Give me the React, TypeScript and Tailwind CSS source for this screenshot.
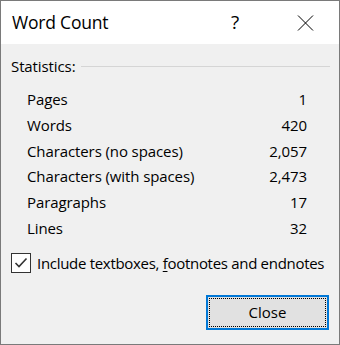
import React from "react";

const rows: [string, string][] = [
  ["Pages", "1"],
  ["Words", "420"],
  ["Characters (no spaces)", "2,057"],
  ["Characters (with spaces)", "2,473"],
  ["Paragraphs", "17"],
  ["Lines", "32"],
];

export default function App() {
  return (
    <div
      className="w-[340px] h-[345px] border border-[#7a7a7a] bg-[#f0f0f0] flex flex-col text-[#000] overflow-hidden"
      style={{ fontFamily: '"Open Sans", "Noto Sans", sans-serif' }}
    >
      <div className="h-[43px] bg-white flex items-center pl-[11px] shrink-0 relative">
        <span className="text-[17.5px] leading-none tracking-[-0.2px]">Word Count</span>
        <span className="absolute left-[230px] top-[12px] text-[19px] leading-none">?</span>
        <svg className="absolute left-[296px] top-[14px]" width="17" height="16" viewBox="0 0 17 16">
          <path d="M1 0.5 L16 15.5 M16 0.5 L1 15.5" stroke="#000" strokeWidth="1" fill="none" />
        </svg>
      </div>
      <div className="flex flex-col pl-[10px] pr-[9px] pt-[12px]">
        <div className="flex items-center h-[20px]">
          <span className="text-[15px] leading-none tracking-[-0.1px]">Statistics:</span>
          <div className="flex-1 h-px bg-[#d5d5d5] ml-[5px]" />
        </div>
        <div className="flex flex-col pl-[16px] pr-[23px] pt-[11px]">
          {rows.map(([k, v]) => (
            <div key={k} className="flex justify-between items-center h-[25.7px] text-[15px] leading-none tracking-[-0.1px]">
              <span>{k}</span>
              <span>{v}</span>
            </div>
          ))}
        </div>
        <div className="flex items-center mt-[12px] h-[20px]">
          <div className="w-[20px] h-[20px] border border-[#333] bg-white flex items-center justify-center shrink-0">
            <svg width="14" height="12" viewBox="0 0 14 12">
              <path d="M1.5 6 L5 9.5 L12.5 1.5" stroke="#333" strokeWidth="1.6" fill="none" />
            </svg>
          </div>
          <span className="ml-[6px] text-[15px] leading-none tracking-[-0.3px] whitespace-nowrap">
            Include textboxes, <u className="underline-offset-2">f</u>ootnotes and endnotes
          </span>
        </div>
        <div className="flex justify-end mt-[22px] pr-[1px]">
          <div className="w-[123px] h-[35px] border-2 border-[#0078d7] bg-[#e1e1e1] p-px">
            <div className="w-full h-full border border-dotted border-black flex items-center justify-center text-[15px] leading-none">
              Close
            </div>
          </div>
        </div>
      </div>
    </div>
  );
}
